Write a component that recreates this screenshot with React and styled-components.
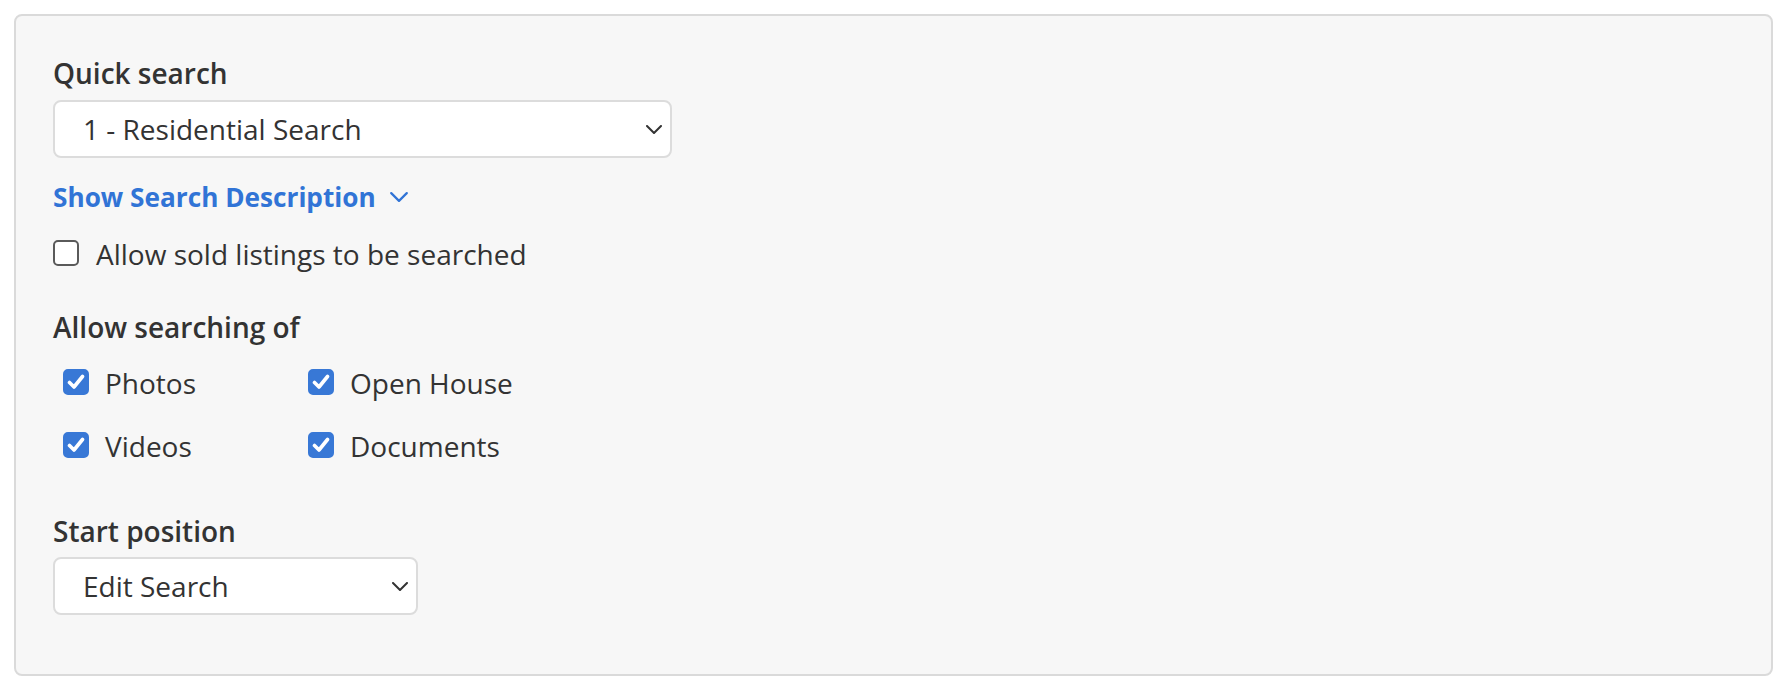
import React, {useState} from 'react'
import styled, {createGlobalStyle} from 'styled-components'

const Global = createGlobalStyle`
  html, body {
    margin: 0;
    padding: 0;
    background: #fff;
  }
  body {
    font-family: "Open Sans", "Noto Sans", "Liberation Sans", sans-serif;
    color: #333;
  }
`

const Panel = styled.div`
  margin: 14px 17px 13px 14px;
  padding: 39px 37px 59px 37px;
  border: 2px solid #dadada;
  border-radius: 8px;
  background: #f7f7f7;
  display: flex;
  flex-direction: column;
  align-items: flex-start;
`

const Label = styled.div`
  font-size: 28px;
  line-height: 36px;
  font-weight: 600;
  color: #333;
  margin-top: ${p => p.top || 0}px;
`

const SelectBox = styled.div`
  box-sizing: border-box;
  width: ${p => p.width}px;
  height: 58px;
  margin-top: ${p => p.top || 0}px;
  padding: 0 8px 0 28px;
  background: #fff;
  border: 2px solid #dcdcdc;
  border-radius: 8px;
  display: flex;
  align-items: center;
  justify-content: space-between;
  font-size: 28px;
  color: #333;
  cursor: pointer;
`

const LinkButton = styled.button`
  margin-top: 21px;
  padding: 0;
  border: 0;
  background: none;
  display: flex;
  align-items: center;
  gap: 14px;
  font-family: inherit;
  font-size: 26.2px;
  line-height: 36px;
  font-weight: 700;
  color: #3174d6;
  cursor: pointer;
`

const CheckRow = styled.label`
  display: flex;
  align-items: center;
  gap: ${p => p.gap || 16}px;
  font-size: 28px;
  line-height: 36px;
  color: #333;
  cursor: pointer;
  margin-top: ${p => p.top || 0}px;
`

const Box = styled.span`
  box-sizing: border-box;
  width: 26px;
  height: 26px;
  margin-top: -3px;
  border-radius: 5px;
  border: 2px solid ${p => p.checked ? '#3878d6' : '#5a5a5a'};
  background: ${p => p.checked ? '#3878d6' : '#fff'};
  display: flex;
  align-items: center;
  justify-content: center;
  flex: none;
`

const Grid = styled.div`
  margin-top: 20px;
  padding-left: 10px;
  display: grid;
  grid-template-columns: 245px auto;
  row-gap: 27px;
`

function Chevron({color = '#333', w = 16, h = 9}) {
  return (
    <svg width={w} height={h} viewBox="0 0 16 9" fill="none">
      <polyline points="1,1 8,8 15,1" stroke={color} strokeWidth="2" strokeLinecap="round" strokeLinejoin="round" />
    </svg>
  )
}

function Checkbox({label, checked, onToggle, top, gap}) {
  return (
    <CheckRow top={top} gap={gap} onClick={onToggle}>
      <Box checked={checked}>
        {checked && (
          <svg width="18" height="16" viewBox="0 0 18 16" fill="none">
            <polyline points="2.5,8.5 7,13 15.5,2.5" stroke="#fff" strokeWidth="3.6" strokeLinecap="round" strokeLinejoin="round" />
          </svg>
        )}
      </Box>
      {label}
    </CheckRow>
  )
}

export default function App () {
  const [sold, setSold] = useState(false)
  const [opts, setOpts] = useState({photos: true, openHouse: true, videos: true, documents: true})
  const toggle = key => setOpts({...opts, [key]: !opts[key]})

  return (
    <>
      <Global />
      <Panel>
        <Label>Quick search</Label>
        <SelectBox width={619} top={9}>
          <span>1 - Residential Search</span>
          <Chevron />
        </SelectBox>
        <LinkButton>
          Show Search Description
          <Chevron color="#3174d6" w={18} h={10} />
        </LinkButton>
        <Checkbox label="Allow sold listings to be searched" checked={sold} onToggle={()=>setSold(!sold)} top={21} gap={17} />

        <Label top={37}>Allow searching of</Label>
        <Grid>
          <Checkbox label="Photos" checked={opts.photos} onToggle={()=>toggle('photos')} />
          <Checkbox label="Open House" checked={opts.openHouse} onToggle={()=>toggle('openHouse')} />
          <Checkbox label="Videos" checked={opts.videos} onToggle={()=>toggle('videos')} />
          <Checkbox label="Documents" checked={opts.documents} onToggle={()=>toggle('documents')} />
        </Grid>

        <Label top={49}>Start position</Label>
        <SelectBox width={365} top={8}>
          <span>Edit Search</span>
          <Chevron />
        </SelectBox>
      </Panel>
    </>
  )
}
